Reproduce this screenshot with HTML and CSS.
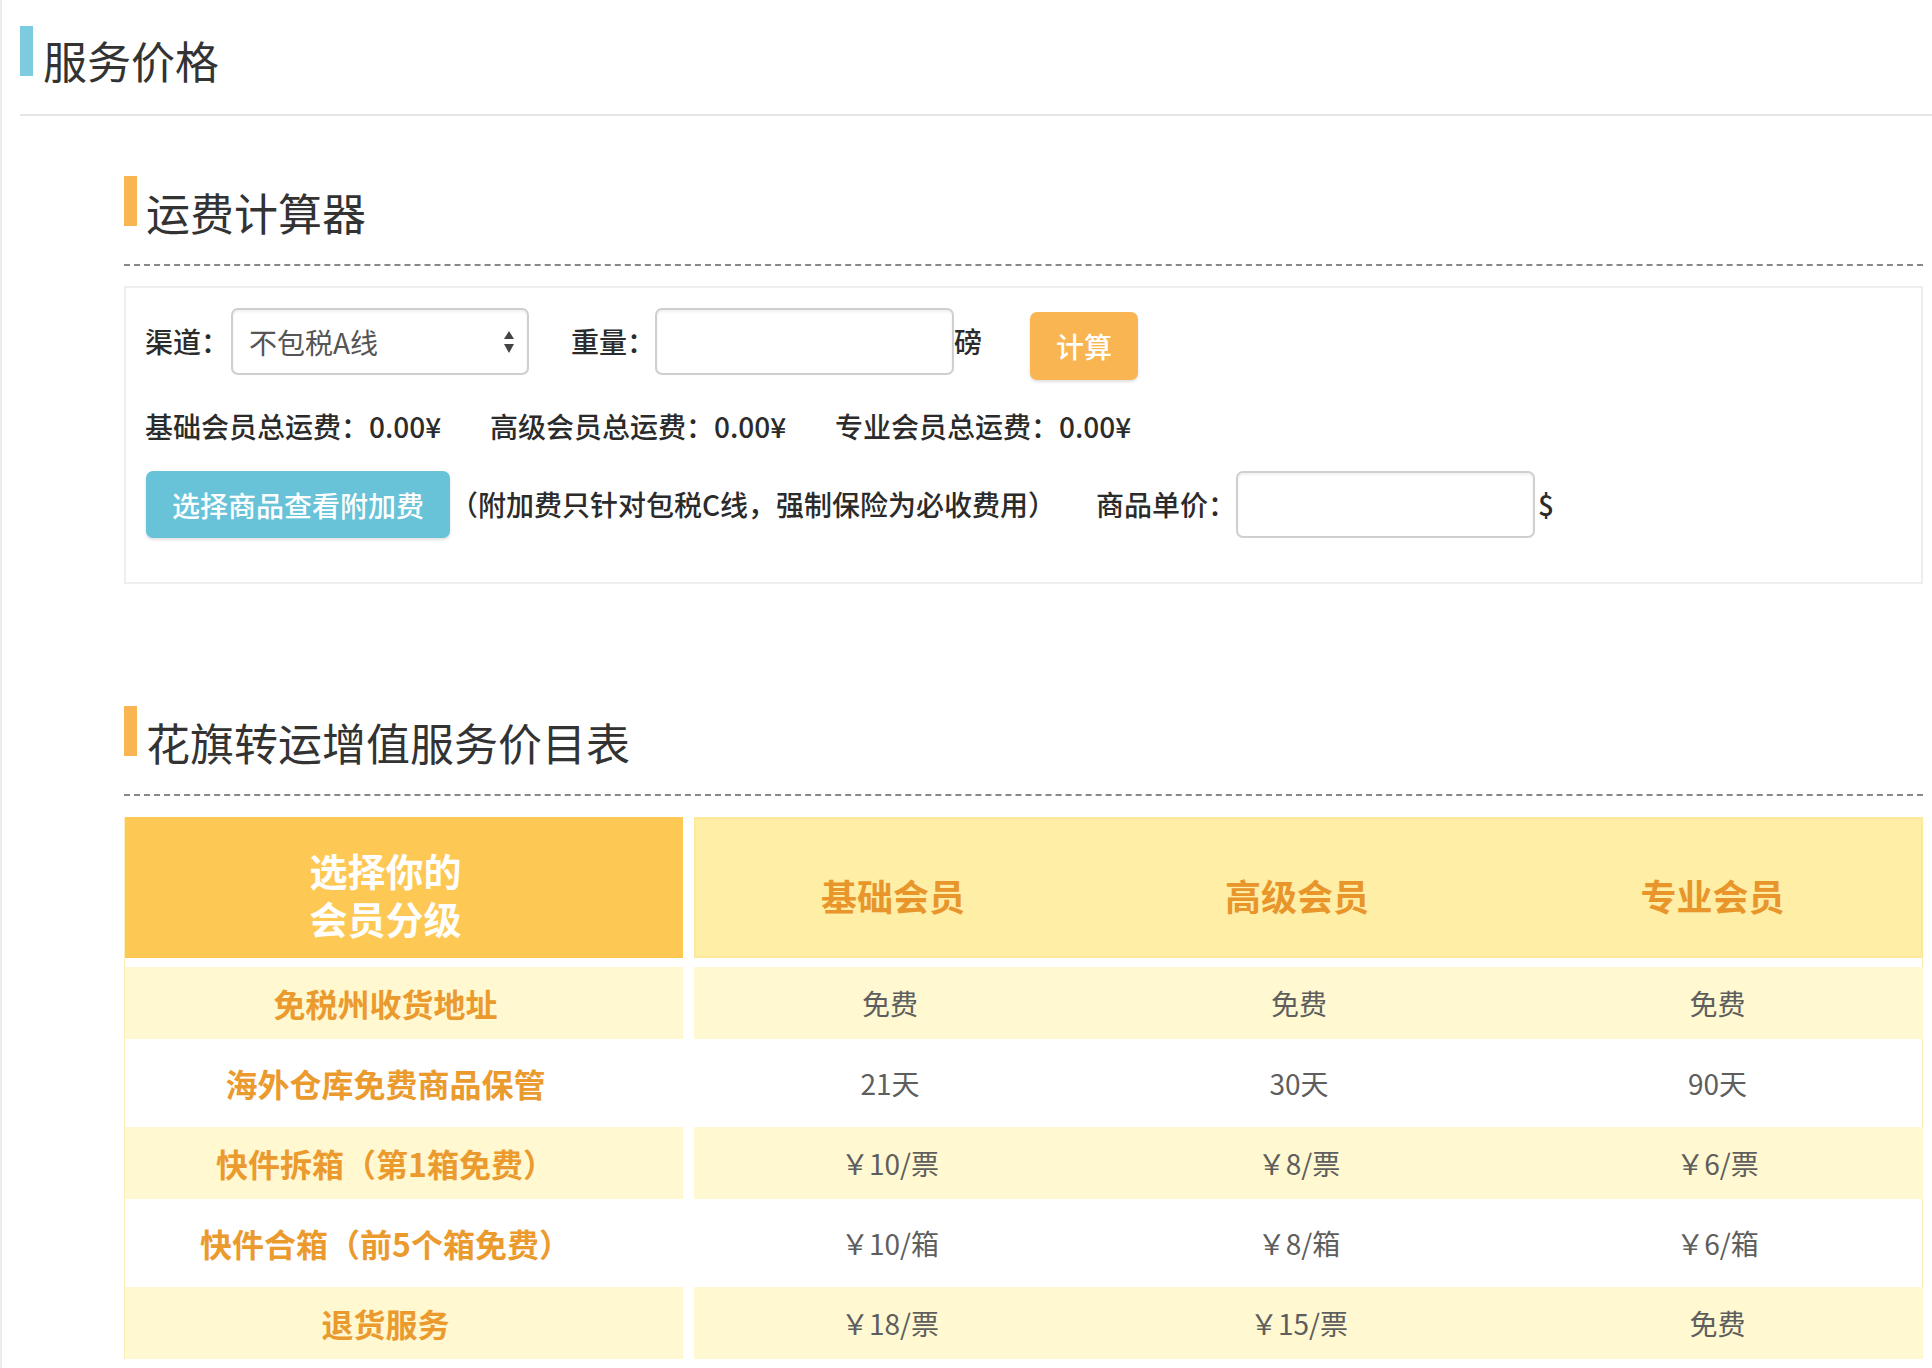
FILE: index.html
```html
<!DOCTYPE html>
<html lang="zh-CN">
<head>
<meta charset="utf-8">
<title>服务价格</title>
<link rel="stylesheet" href="styles.css">
</head>
<body>
<div class="page">
  <header class="page-head">
    <span class="bar bar-blue"></span>
    <h1 class="page-title">服务价格</h1>
  </header>

  <section class="section">
    <div class="sec-head">
      <span class="bar bar-orange"></span>
      <h2 class="sec-title">运费计算器</h2>
    </div>
    <div class="calc">
      <div class="calc-row row-input">
        <span class="lbl">渠道：</span>
        <div class="select">
          <span class="select-text">不包税A线</span>
          <svg class="select-arrows" width="12" height="24" viewBox="0 0 12 24">
            <path d="M6 1 L11 9 L1 9 Z" fill="#444"/>
            <path d="M1 14 L11 14 L6 23 Z" fill="#444"/>
          </svg>
        </div>
        <span class="lbl lbl-weight">重量：</span>
        <input class="field" type="text">
        <span class="unit">磅</span>
        <button class="btn btn-orange" type="button">计算</button>
      </div>
      <div class="calc-row totals">
        <span class="total">基础会员总运费：0.00¥</span>
        <span class="total">高级会员总运费：0.00¥</span>
        <span class="total">专业会员总运费：0.00¥</span>
      </div>
      <div class="calc-row row-extra">
        <button class="btn btn-blue" type="button">选择商品查看附加费</button>
        <span class="note">（附加费只针对包税C线，强制保险为必收费用）</span>
        <span class="lbl lbl-price">商品单价：</span>
        <input class="field" type="text">
        <span class="unit unit-dollar">$</span>
      </div>
    </div>
  </section>

  <section class="section section-price">
    <div class="sec-head">
      <span class="bar bar-orange"></span>
      <h2 class="sec-title">花旗转运增值服务价目表</h2>
    </div>
    <div class="ptable">
      <div class="prow phead">
        <div class="pcell plabel phead-left">
          <span class="phead-line">选择你的</span>
          <span class="phead-line">会员分级</span>
        </div>
        <div class="pvals phead-right">
          <div class="pval">基础会员</div>
          <div class="pval">高级会员</div>
          <div class="pval">专业会员</div>
        </div>
      </div>
      <div class="prow alt">
        <div class="pcell plabel">免税州收货地址</div>
        <div class="pvals">
          <div class="pval">免费</div>
          <div class="pval">免费</div>
          <div class="pval">免费</div>
        </div>
      </div>
      <div class="prow">
        <div class="pcell plabel">海外仓库免费商品保管</div>
        <div class="pvals">
          <div class="pval">21天</div>
          <div class="pval">30天</div>
          <div class="pval">90天</div>
        </div>
      </div>
      <div class="prow alt">
        <div class="pcell plabel">快件拆箱（第1箱免费）</div>
        <div class="pvals">
          <div class="pval">￥10/票</div>
          <div class="pval">￥8/票</div>
          <div class="pval">￥6/票</div>
        </div>
      </div>
      <div class="prow">
        <div class="pcell plabel">快件合箱（前5个箱免费）</div>
        <div class="pvals">
          <div class="pval">￥10/箱</div>
          <div class="pval">￥8/箱</div>
          <div class="pval">￥6/箱</div>
        </div>
      </div>
      <div class="prow alt">
        <div class="pcell plabel">退货服务</div>
        <div class="pvals">
          <div class="pval">￥18/票</div>
          <div class="pval">￥15/票</div>
          <div class="pval">免费</div>
        </div>
      </div>
    </div>
  </section>
</div>
</body>
</html>
```

FILE: styles.css
```css
* { box-sizing: border-box; }

html, body {
  margin: 0;
  padding: 0;
  background: #fff;
}

body {
  font-family: "Noto Sans CJK SC", "Microsoft YaHei", "Noto Sans", sans-serif;
  color: #333;
}

.page {
  border-left: 2px solid #ececec;
  min-height: 1368px;
  overflow: hidden;
}

/* page header */
.page-head {
  display: flex;
  align-items: flex-start;
  margin-left: 18px;
  height: 116px;
  border-bottom: 2px solid #e6e6e6;
}

.bar {
  display: block;
  flex: none;
  width: 13px;
  height: 50px;
}
.bar-blue { background: #7ccbdf; margin-top: 26px; }
.bar-orange { background: #f8b551; margin-top: 60px; }

.page-title {
  margin: 38px 0 0 10px;
  font-size: 44px;
  line-height: 44px;
  font-weight: normal;
  color: #333;
}

/* sections */
.section {
  margin: 0 9px 0 122px;
}

.sec-head {
  display: flex;
  align-items: flex-start;
  height: 150px;
  border-bottom: 2px dashed #888;
}

.sec-title {
  margin: 74px 0 0 9px;
  font-size: 44px;
  line-height: 44px;
  font-weight: normal;
  color: #333;
}

.section-price .sec-head { margin-top: 62px; }

/* calculator */
.calc {
  margin-top: 20px;
  border: 2px solid #eee;
  height: 298px;
  padding: 20px 0 0 19px;
}

.calc-row {
  display: flex;
  align-items: flex-start;
  font-size: 28px;
  font-weight: 500;
  color: #2b2b2b;
}

.row-input { height: 72px; }

.lbl, .unit, .note {
  line-height: 67px;
  white-space: nowrap;
}

.select {
  display: flex;
  align-items: center;
  justify-content: space-between;
  margin-left: 2px;
  width: 298px;
  height: 67px;
  border: 2px solid #cfcfcf;
  border-radius: 7px;
  box-shadow: inset 0 2px 3px rgba(0,0,0,0.06);
  padding: 0 12px 0 16px;
  background: #fff;
}
.select-text { color: #555; font-size: 28px; font-weight: normal; }
.select-arrows { display: block; }

.lbl-weight { margin-left: 42px; }

.field {
  width: 299px;
  height: 67px;
  border: 2px solid #cfcfcf;
  border-radius: 7px;
  box-shadow: inset 0 2px 3px rgba(0,0,0,0.06);
  background: #fff;
  font-size: 28px;
  padding: 0 12px;
  margin: 0;
  outline: none;
}

.btn {
  border: none;
  border-radius: 7px;
  color: #fff;
  font-family: inherit;
  font-size: 28px;
  font-weight: 500;
  cursor: pointer;
  padding: 0;
}

.btn-orange {
  margin: 4px 0 0 48px;
  width: 108px;
  height: 68px;
  background: #f8b552;
  box-shadow: 0 2px 3px rgba(0,0,0,0.12);
}

.btn-blue {
  margin-left: 1px;
  width: 304px;
  height: 67px;
  background: #68c2d8;
  box-shadow: 0 2px 3px rgba(0,0,0,0.12);
}

.totals {
  margin-top: 26px;
  display: grid;
  grid-template-columns: 345px 345px auto;
  line-height: 40px;
}

.row-extra { margin-top: 25px; }

.lbl-price { margin-left: 40px; }
.unit-dollar { margin-left: 3px; }

/* price table */
.ptable {
  margin-top: 21px;
  display: flex;
  flex-direction: column;
  gap: 8px;
  border-left: 1px solid #fcecb5;
  border-right: 1px solid #fcecb5;
}

.prow {
  display: grid;
  grid-template-columns: 558px 1229px;
  column-gap: 11px;
  height: 72px;
}

.prow.phead {
  height: 141px;
  margin-bottom: 1px;
}

.pcell {
  display: flex;
  align-items: center;
  justify-content: center;
}

.plabel {
  padding-right: 37px;
  font-size: 32px;
  font-weight: bold;
  color: #eb9a2e;
  white-space: nowrap;
}

.pvals {
  display: grid;
  grid-template-columns: 392px 426px 411px;
}

.pval {
  display: flex;
  align-items: center;
  justify-content: center;
  font-size: 28px;
  color: #5e5e5e;
  white-space: nowrap;
}

.alt .plabel,
.alt .pvals { background: #fff8d1; }

.phead-left {
  flex-direction: column;
  background: #fec855;
  color: #fff;
  font-size: 38px;
  text-align: center;
  padding-top: 12px;
}

.phead-line {
  display: block;
  height: 48px;
  line-height: 48px;
  overflow: visible;
}

.phead-right {
  grid-template-columns: 394px 414px 417px;
  background: #feeea6;
  border: 2px solid #fde89c;
}

.phead-right .pval {
  font-size: 36px;
  font-weight: bold;
  color: #e8962b;
  padding-top: 14px;
}
```
